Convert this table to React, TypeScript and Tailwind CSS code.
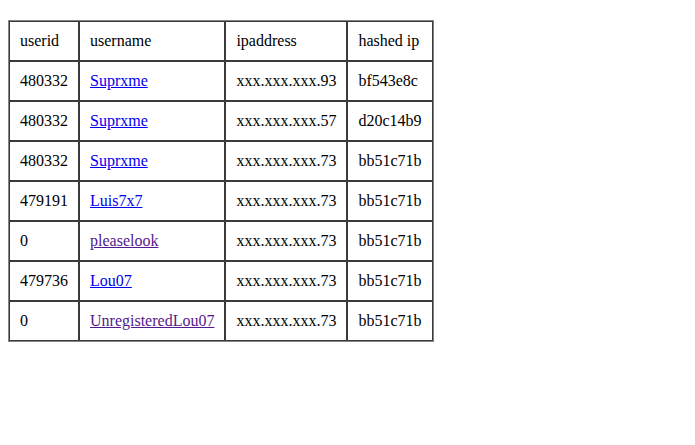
import React from "react";

const rows: { id: string; name: string; visited?: boolean; ip: string; hash: string }[] = [
  { id: "480332", name: "Suprxme", ip: "xxx.xxx.xxx.93", hash: "bf543e8c" },
  { id: "480332", name: "Suprxme", ip: "xxx.xxx.xxx.57", hash: "d20c14b9" },
  { id: "480332", name: "Suprxme", ip: "xxx.xxx.xxx.73", hash: "bb51c71b" },
  { id: "479191", name: "Luis7x7", ip: "xxx.xxx.xxx.73", hash: "bb51c71b" },
  { id: "0", name: "pleaselook", visited: true, ip: "xxx.xxx.xxx.73", hash: "bb51c71b" },
  { id: "479736", name: "Lou07", ip: "xxx.xxx.xxx.73", hash: "bb51c71b" },
  { id: "0", name: "UnregisteredLou07", visited: true, ip: "xxx.xxx.xxx.73", hash: "bb51c71b" },
];

const cell = "border border-[#3a3a3a] px-[10px] py-[10px] text-left font-normal align-middle whitespace-nowrap";

export default function App() {
  return (
    <div
      className="min-h-[445px] bg-white pl-2 pt-5 text-[16px] leading-[18px] text-black"
      style={{ fontFamily: '"Liberation Serif", "Times New Roman", serif' }}
    >
      <table className="border-separate border-spacing-0 border border-[#858585]">
        <thead>
          <tr>
            <th className={cell}>userid</th>
            <th className={cell}>username</th>
            <th className={cell}>ipaddress</th>
            <th className={cell}>hashed ip</th>
          </tr>
        </thead>
        <tbody>
          {rows.map((r, i) => (
            <tr key={i}>
              <td className={cell}>{r.id}</td>
              <td className={cell}>
                <a
                  href="#"
                  className={r.visited ? "text-[#551a8b] underline" : "text-[#0000ee] underline"}
                >
                  {r.name}
                </a>
              </td>
              <td className={cell}>{r.ip}</td>
              <td className={cell}>{r.hash}</td>
            </tr>
          ))}
        </tbody>
      </table>
    </div>
  );
}
